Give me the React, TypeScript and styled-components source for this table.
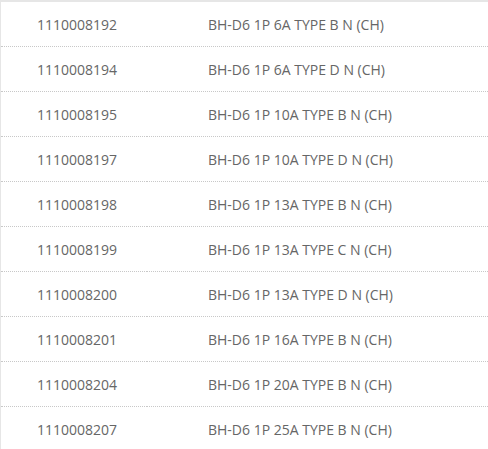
import React from "react";
import styled, { createGlobalStyle } from "styled-components";

const Global = createGlobalStyle`
  html, body { margin: 0; padding: 0; background: #ffffff; }
  body { font-family: "Open Sans", "Noto Sans", sans-serif; }
`;

const Table = styled.div`
  width: 488px;
  border-top: 2px solid #e6e6e6;
  border-left: 1px solid #e6e6e6;
  box-sizing: border-box;
`;

const Row = styled.div`
  display: grid;
  grid-template-columns: 146px 1fr;
`;

const Cell = styled.div<{ $pad: number }>`
  height: 44px;
  display: flex;
  align-items: center;
  padding-left: ${(p) => p.$pad}px;
  border-bottom: 1px dotted #c8c8c8;
  font-size: 14px;
  color: #666666;
  white-space: nowrap;
`;

const rows: [string, string][] = [
  ["1110008192", "BH-D6 1P 6A TYPE B N (CH)"],
  ["1110008194", "BH-D6 1P 6A TYPE D N (CH)"],
  ["1110008195", "BH-D6 1P 10A TYPE B N (CH)"],
  ["1110008197", "BH-D6 1P 10A TYPE D N (CH)"],
  ["1110008198", "BH-D6 1P 13A TYPE B N (CH)"],
  ["1110008199", "BH-D6 1P 13A TYPE C N (CH)"],
  ["1110008200", "BH-D6 1P 13A TYPE D N (CH)"],
  ["1110008201", "BH-D6 1P 16A TYPE B N (CH)"],
  ["1110008204", "BH-D6 1P 20A TYPE B N (CH)"],
  ["1110008207", "BH-D6 1P 25A TYPE B N (CH)"],
];

export default function App() {
  return (
    <>
      <Global />
      <Table>
        {rows.map(([code, name]) => (
          <Row key={code}>
            <Cell $pad={36}>{code}</Cell>
            <Cell $pad={61}>{name}</Cell>
          </Row>
        ))}
      </Table>
    </>
  );
}
